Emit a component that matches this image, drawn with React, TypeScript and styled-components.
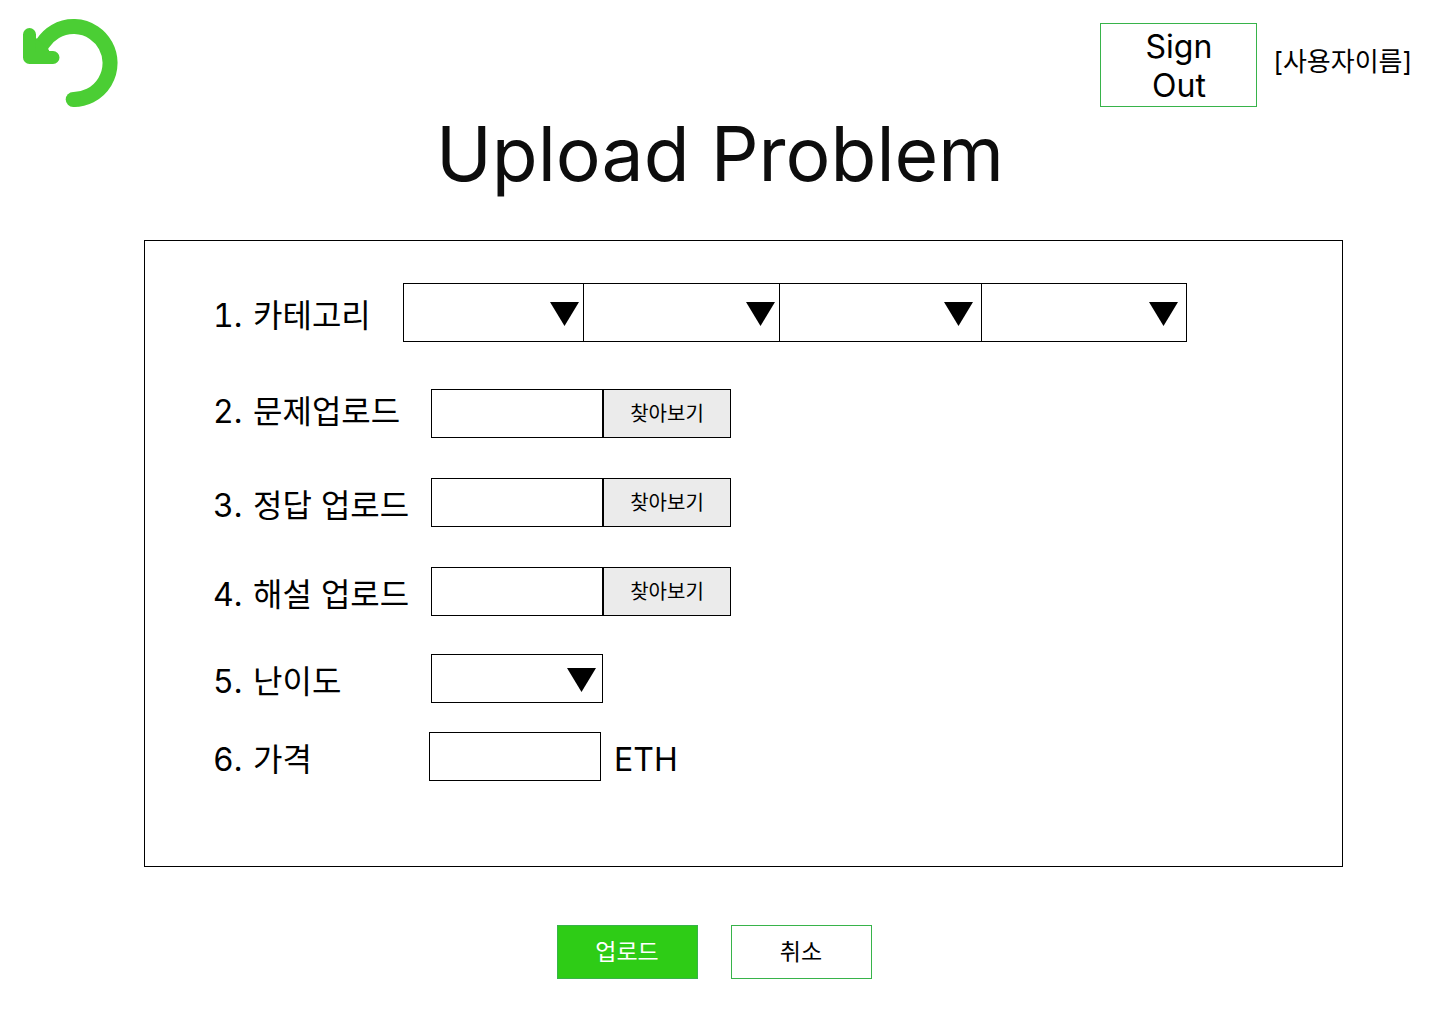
import React from "react";
import styled, { createGlobalStyle } from "styled-components";

const GlobalStyle = createGlobalStyle`
  *, *::before, *::after { box-sizing: border-box; }
  body {
    margin: 0;
    background: #fff;
    color: #000;
    font-family: Inter, "Noto Sans CJK KR", sans-serif;
  }
  button, input, select { font: inherit; color: inherit; border-radius: 0; }
  button { cursor: pointer; }
`;

const Header = styled.header`
  display: flex;
  justify-content: space-between;
  align-items: flex-start;
  padding: 19px 28px 0 23px;
`;

const BackButton = styled.button`
  display: block;
  padding: 0;
  border: 0;
  background: none;
  line-height: 0;
`;

const Account = styled.div`
  display: flex;
  align-items: center;
  gap: 16px;
  padding-top: 4px;
`;

const SignOutButton = styled.button`
  width: 157px;
  padding: 3px 40px 1px;
  border: 1px solid #37b34a;
  background: #fff;
  font-size: 32px;
  line-height: 39px;
`;

const UserName = styled.span`
  padding-bottom: 6px;
  font-size: 26px;
  line-height: 32px;
  white-space: nowrap;
`;

const Title = styled.h1`
  margin: 0;
  color: #0d0d0d;
  font-size: 75px;
  font-weight: 400;
  line-height: 94px;
  text-align: center;
`;

const Panel = styled.section`
  display: flex;
  flex-direction: column;
  margin: 39px 97px 0 10%;
  padding: 42px 68px 85px;
  border: 1px solid #000;
`;

const Row = styled.div<{ $gap?: number; $align?: string }>`
  display: flex;
  align-items: ${(p) => p.$align ?? "center"};
  margin-top: ${(p) => p.$gap ?? 0}px;
`;

const Label = styled.label<{ $width?: number }>`
  display: flex;
  flex: none;
  width: ${(p) => p.$width ?? 218}px;
  padding-top: 6px;
  font-size: 32px;
  line-height: 33px;
  white-space: nowrap;
`;

const Step = styled.span`
  width: 40px;
  font-variant-numeric: tabular-nums;
`;

const Unit = styled.span`
  padding: 6px 0 0 13px;
  font-size: 32px;
  line-height: 33px;
`;

const CategoryGroup = styled.div`
  display: grid;
  grid-template-columns: 180fr 196fr 202fr 204fr;
  flex: 0 1 784px;
  height: 59px;
  border: 1px solid #000;
`;

const SelectBox = styled.div`
  position: relative;
  min-width: 0;

  ${CategoryGroup} > &:not(:last-child) {
    border-right: 1px solid #000;
  }
`;

const Select = styled.select`
  display: block;
  width: 100%;
  height: 100%;
  padding: 0 40px 0 12px;
  border: 0;
  background: transparent;
  appearance: none;
  font-size: 20px;
`;

const Arrow = styled.svg<{ $right: number }>`
  position: absolute;
  top: calc(50% - 11px);
  right: ${(p) => p.$right}px;
  pointer-events: none;
`;

const LevelBox = styled(SelectBox)`
  width: 172px;
  height: 49px;
  border: 1px solid #000;
`;

const TextField = styled.input`
  width: 172px;
  height: 49px;
  padding: 0 12px;
  border: 1px solid #000;
  background: #fff;
  font-size: 20px;
`;

const BrowseButton = styled.button`
  width: 128px;
  height: 49px;
  padding: 0;
  border: 1px solid #000;
  background: #ebebeb;
  font-size: 20px;
  line-height: 24px;
`;

const Actions = styled.div`
  display: flex;
  justify-content: center;
  gap: 33px;
  padding: 58px 12px 45px 0;
`;

const ActionButton = styled.button<{ $primary?: boolean }>`
  width: 141px;
  height: 54px;
  padding: 0;
  border: 1px solid #37b34a;
  background: ${(p) => (p.$primary ? "#2ecc16" : "#fff")};
  color: ${(p) => (p.$primary ? "#fff" : "#000")};
  font-size: 23px;
  line-height: 28px;
`;

function BackIcon() {
  return (
    <svg width="95" height="88" viewBox="23 19 95 88" fill="none" stroke="#4bce34" aria-hidden="true">
      <path d="M73.2 99.5A36.5 36.5 0 1 0 42.7 43.5L38.5 50.5" strokeWidth="15" />
      <path d="M73.2 99.5h.1" strokeWidth="15" strokeLinecap="round" />
      <path d="M29.5 34.5V57.5H53" strokeWidth="13" strokeLinecap="round" strokeLinejoin="round" />
      <path d="M36 38L49 50V52H35Z" fill="#4bce34" stroke="none" />
    </svg>
  );
}

function DropArrow({ right }: { right: number }) {
  return (
    <Arrow $right={right} width="29" height="24" viewBox="0 0 29 24" aria-hidden="true">
      <path d="M0 0H29L14.5 24Z" fill="#000" />
    </Arrow>
  );
}

const categories = [
  { id: "category", name: "카테고리 1", arrowRight: 4 },
  { id: "category-2", name: "카테고리 2", arrowRight: 4 },
  { id: "category-3", name: "카테고리 3", arrowRight: 8 },
  { id: "category-4", name: "카테고리 4", arrowRight: 8 },
];

const uploads = [
  { id: "problem", step: "2.", label: "문제업로드", gap: 47, align: "flex-start" },
  { id: "answer", step: "3.", label: "정답 업로드", gap: 40, align: "center" },
  { id: "solution", step: "4.", label: "해설 업로드", gap: 40, align: "center" },
];

export default function App() {
  return (
    <>
      <GlobalStyle />
      <Header>
        <BackButton type="button" aria-label="뒤로">
          <BackIcon />
        </BackButton>
        <Account>
          <SignOutButton type="button">Sign Out</SignOutButton>
          <UserName>[사용자이름]</UserName>
        </Account>
      </Header>
      <main>
        <Title>Upload Problem</Title>
        <form onSubmit={(e) => e.preventDefault()}>
          <Panel>
            <Row>
              <Label htmlFor="category" $width={190}>
                <Step>1.</Step> 카테고리
              </Label>
              <CategoryGroup>
                {categories.map((c) => (
                  <SelectBox key={c.id}>
                    <Select id={c.id} aria-label={c.name} />
                    <DropArrow right={c.arrowRight} />
                  </SelectBox>
                ))}
              </CategoryGroup>
            </Row>
            {uploads.map((u) => (
              <Row key={u.id} $gap={u.gap} $align={u.align}>
                <Label htmlFor={u.id}>
                  <Step>{u.step}</Step> {u.label}
                </Label>
                <TextField id={u.id} type="text" readOnly />
                <BrowseButton type="button">찾아보기</BrowseButton>
              </Row>
            ))}
            <Row $gap={38}>
              <Label htmlFor="level">
                <Step>5.</Step> 난이도
              </Label>
              <LevelBox>
                <Select id="level" />
                <DropArrow right={6} />
              </LevelBox>
            </Row>
            <Row $gap={29}>
              <Label htmlFor="price" $width={216}>
                <Step>6.</Step> 가격
              </Label>
              <TextField id="price" type="text" inputMode="decimal" />
              <Unit>ETH</Unit>
            </Row>
          </Panel>
          <Actions>
            <ActionButton type="submit" $primary>업로드</ActionButton>
            <ActionButton type="button">취소</ActionButton>
          </Actions>
        </form>
      </main>
    </>
  );
}
